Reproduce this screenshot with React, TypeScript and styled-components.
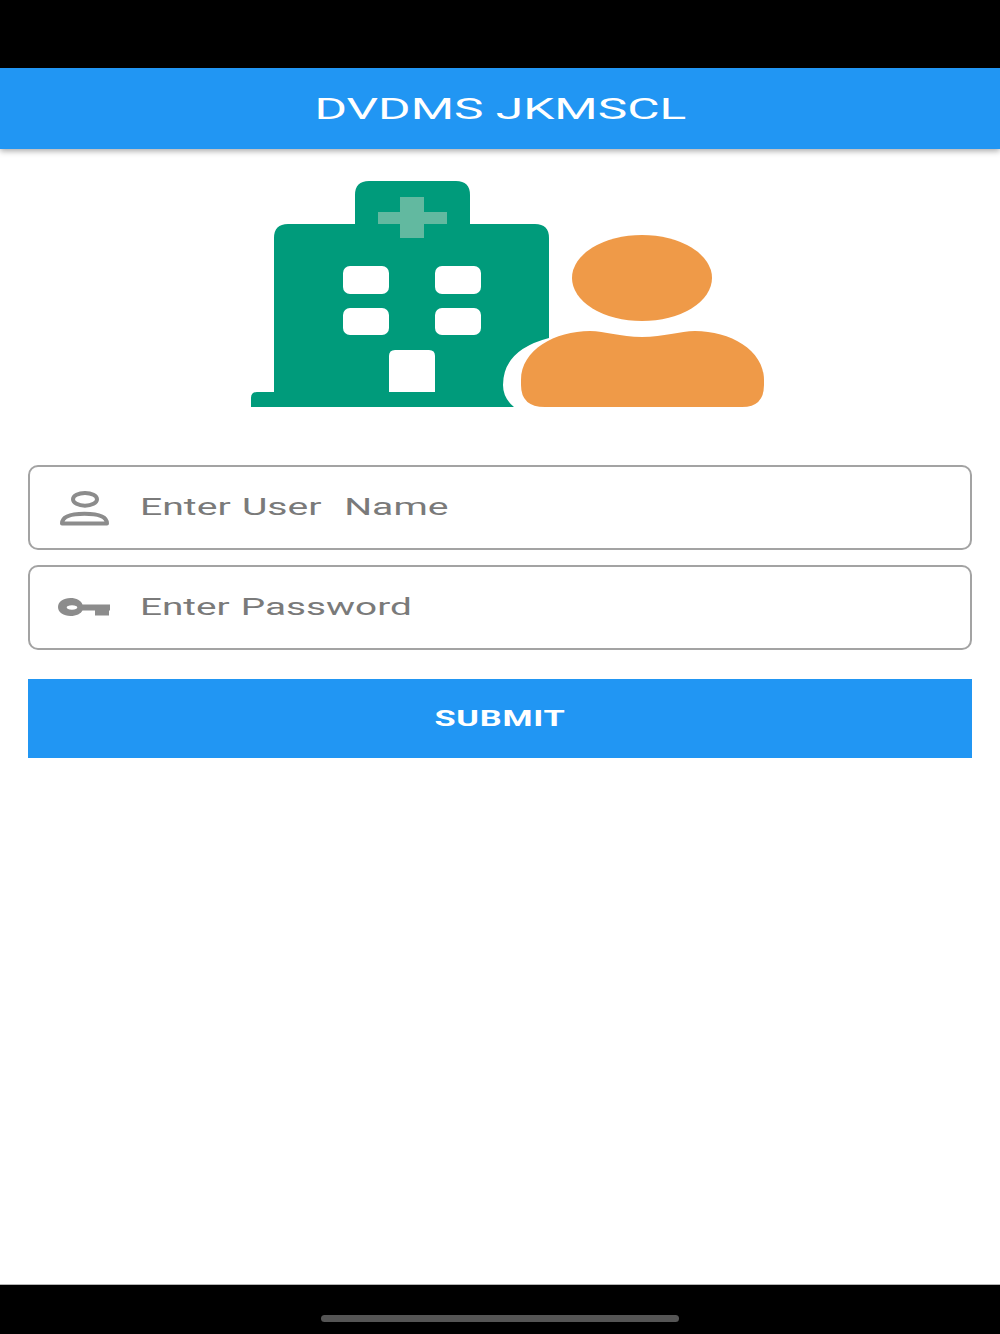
import * as React from 'react';
import styled, { createGlobalStyle } from 'styled-components';

const GlobalStyle = createGlobalStyle`
  html, body {
    margin: 0;
    padding: 0;
    background: #fff;
  }
`;

const Screen = styled.div`
  width: 1000px;
  height: 1334px;
  display: flex;
  flex-direction: column;
  overflow: hidden;
  font-family: Roboto, 'Liberation Sans', sans-serif;
`;

const StatusBar = styled.div`
  height: 68px;
  background: #000;
`;

const Header = styled.header`
  height: 81px;
  flex-shrink: 0;
  display: flex;
  align-items: center;
  justify-content: center;
  background: #2196f3;
  box-shadow: 0 2px 6px rgba(0, 0, 0, 0.35);
  position: relative;
`;

// the whole capture is stretched sideways, so the text has to be as well
const Title = styled.h1`
  margin: 0;
  color: #fff;
  font-size: 30px;
  font-weight: 400;
  line-height: 1;
  white-space: nowrap;
  transform: scaleX(1.655);
`;

const Main = styled.main`
  flex: 1;
  display: flex;
  flex-direction: column;
  padding: 31px 28px 0;
`;

const Logo = styled.svg`
  width: 516px;
  height: 228px;
  align-self: center;
  margin-left: 16px;
  flex-shrink: 0;
`;

const Form = styled.form`
  display: flex;
  flex-direction: column;
  margin-top: 57px;
`;

const Field = styled.label`
  height: 85px;
  box-sizing: border-box;
  display: flex;
  align-items: center;
  padding-left: 28px;
  padding-bottom: 1px;
  border: 2px solid #a3a3a3;
  border-radius: 10px;
  margin-bottom: 15px;
`;

const FieldIcon = styled.svg`
  width: 54px;
  height: 40px;
  flex-shrink: 0;
  color: #8c8c8c;
`;

const FieldText = styled.span<{ $stretch: number }>`
  margin-left: 28px;
  color: #7a7a7a;
  font-size: 24px;
  line-height: 1;
  word-spacing: 1px;
  white-space: pre;
  transform: scaleX(${(p) => p.$stretch});
  transform-origin: left center;
`;

const Submit = styled.button`
  height: 79px;
  margin-top: 14px;
  border: 0;
  padding: 0;
  display: flex;
  align-items: center;
  justify-content: center;
  background: #2196f3;
  color: #fff;
  font-family: inherit;
`;

const SubmitLabel = styled.span`
  font-size: 22px;
  font-weight: 700;
  line-height: 1;
  letter-spacing: 0.5px;
  transform: scaleX(1.56);
`;

const NavBar = styled.div`
  height: 50px;
  flex-shrink: 0;
  box-sizing: border-box;
  display: flex;
  justify-content: center;
  padding-top: 30px;
  background: #000;
  border-top: 1px solid #b5b5b5;
`;

const HomePill = styled.div`
  width: 358px;
  height: 7px;
  border-radius: 4px;
  background: #555;
`;

const HospitalLogo = () => (
  <Logo viewBox="250 180 516 228">
    <path
      fill="#009b7b"
      d="M251 407 V398 Q251 392 257 392 H274 V238 Q274 224 288 224 H355 V195 Q355 181 369 181 H456 Q470 181 470 195 V224 H535 Q549 224 549 238 V338 Q503 350 503 385 Q503 398 514 407 Z"
    />
    <path fill="#62b9a0" d="M400 197 H424 V212 H447 V224 H424 V238 H400 V224 H378 V212 H400 Z" />
    <rect x="343" y="266" width="46" height="28" rx="7" fill="#fff" />
    <rect x="435" y="266" width="46" height="28" rx="7" fill="#fff" />
    <rect x="343" y="308" width="46" height="27" rx="7" fill="#fff" />
    <rect x="435" y="308" width="46" height="27" rx="7" fill="#fff" />
    <path fill="#fff" d="M389 392 V356 Q389 350 395 350 H429 Q435 350 435 356 V392 Z" />
    <ellipse cx="642" cy="278" rx="70" ry="43" fill="#ef9a48" />
    <path
      fill="#ef9a48"
      d="M521 380 C521 350 555 331 590 331 C605 331 620 337 642 337 C664 337 680 331 695 331 C730 331 764 350 764 380 V385 Q764 407 742 407 H545 Q521 407 521 385 Z"
    />
  </Logo>
);

const UserIcon = () => (
  <FieldIcon viewBox="0 0 54 40" fill="none" stroke="currentColor" strokeWidth="4">
    <ellipse cx="27" cy="12.3" rx="12" ry="6.4" />
    <path strokeLinejoin="round" d="M4 36.5 C4 29.5 14 26.7 26.5 26.7 C39 26.7 49 29.5 49 36.5 Z" />
  </FieldIcon>
);

const KeyIcon = () => (
  <FieldIcon viewBox="0 0 54 40" fill="currentColor">
    <path
      fillRule="evenodd"
      d="M12.5 11 C18.5 11 23 13.5 24.5 17.5 H52 V23.5 H51 V28.5 H37 V23.5 H24.5 C23 26.5 18.5 29 12.5 29 C5.5 29 0 25.5 0 20 C0 14.5 5.5 11 12.5 11 Z M14 18.3 C10.5 18.3 8.7 19.3 8.7 20.5 C8.7 21.7 10.5 22.7 14 22.7 C17.5 22.7 19.3 21.7 19.3 20.5 C19.3 19.3 17.5 18.3 14 18.3 Z"
    />
  </FieldIcon>
);

export default function App() {
  return (
    <Screen>
      <GlobalStyle />
      <StatusBar />
      <Header>
        <Title>DVDMS JKMSCL</Title>
      </Header>
      <Main>
        <HospitalLogo />
        <Form onSubmit={(e) => e.preventDefault()}>
          <Field>
            <UserIcon />
            <FieldText $stretch={1.63}>{'Enter User  Name'}</FieldText>
          </Field>
          <Field>
            <KeyIcon />
            <FieldText $stretch={1.612}>Enter Password</FieldText>
          </Field>
          <Submit type="submit">
            <SubmitLabel>SUBMIT</SubmitLabel>
          </Submit>
        </Form>
      </Main>
      <NavBar>
        <HomePill />
      </NavBar>
    </Screen>
  );
}
